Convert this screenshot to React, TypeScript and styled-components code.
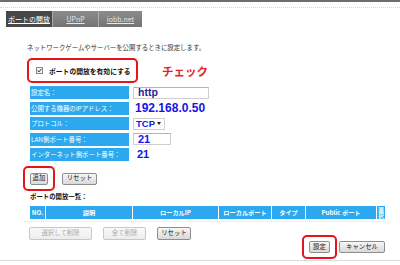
import styled, { createGlobalStyle } from 'styled-components';

const GlobalStyle = createGlobalStyle`
  html, body {
    margin: 0;
    padding: 0;
    background: #fff;
  }
  body {
    font-family: "Noto Sans CJK JP", "Liberation Sans", sans-serif;
    color: #222;
  }
`;

const Page = styled.div`
  width: 400px;
  height: 265px;
  overflow: hidden;
  display: flex;
  flex-direction: column;
`;

const TopRule = styled.div`
  height: 2px;
  background: #6e6e6e;
`;

const DotRule = styled.div`
  margin-top: 5px;
  border-top: 1px dotted #c4dbe4;
`;

const Tabs = styled.nav`
  display: flex;
  margin: 3px 0 0 6px;
  height: 16px;
`;

const Tab = styled.a<{ $active?: boolean; $w: number }>`
  width: ${(p) => p.$w}px;
  display: flex;
  align-items: center;
  justify-content: center;
  background: ${(p) =>
    p.$active ? '#474747' : 'linear-gradient(#8c8c8c, #747474)'};
  color: ${(p) => (p.$active ? '#fff' : '#e6e6e6')};
  border-left: ${(p) => (p.$active ? 'none' : '1px solid #ababab')};
  font-size: 7px;
  line-height: 8px;
  text-decoration: underline;
`;

const Intro = styled.p`
  margin: 16px 0 0 27px;
  font-size: 6.4px;
  line-height: 10px;
  color: #333;
`;

const EnableRow = styled.div`
  display: flex;
  align-items: center;
  gap: 24px;
  margin: 5px 0 0 27px;
`;

const RedFrame = styled.div<{ $w: number; $h: number }>`
  box-sizing: border-box;
  width: ${(p) => p.$w}px;
  height: ${(p) => p.$h}px;
  border: 2px solid #e5141b;
  border-radius: 5px;
  display: flex;
  align-items: center;
`;

const EnableLabel = styled.label`
  display: flex;
  align-items: center;
  gap: 6px;
  margin-left: 7px;
  font-size: 6.8px;
  font-weight: bold;
  color: #111;
`;

const CheckBox = styled.span`
  box-sizing: border-box;
  width: 7px;
  height: 7px;
  border: 1px solid #8a8a8a;
  background: #f4f4f4;
  display: flex;
  align-items: center;
  justify-content: center;
`;

const Note = styled.span`
  font-size: 11.5px;
  font-weight: bold;
  color: #ec1c24;
`;

const Form = styled.div`
  display: grid;
  grid-template-columns: 99px 1fr;
  grid-auto-rows: 13px;
  column-gap: 4px;
  row-gap: 2.5px;
  margin: 3px 0 0 30px;
`;

const Label = styled.div`
  background: #2ba8ee;
  color: #fff;
  font-size: 6.4px;
  line-height: 13px;
  padding-left: 1px;
  white-space: nowrap;
`;

const Value = styled.div`
  display: flex;
  align-items: center;
`;

const TextBox = styled.span<{ $w: number }>`
  box-sizing: border-box;
  width: ${(p) => p.$w}px;
  height: 12px;
  border: 1px solid #cfcfcf;
  border-top-color: #b5b5b5;
  display: flex;
  align-items: center;
  padding-left: 4px;
`;

const BlueText = styled.span<{ $size: number; $dark?: boolean }>`
  font-family: "Liberation Sans", "Noto Sans CJK JP", sans-serif;
  font-size: ${(p) => p.$size}px;
  font-weight: bold;
  color: ${(p) => (p.$dark ? '#22229e' : '#1515e6')};
  line-height: 1;
`;

const Select = styled.span`
  box-sizing: border-box;
  width: 32px;
  height: 12px;
  border: 1px solid #cfcfcf;
  display: flex;
  align-items: center;
  justify-content: space-between;
  padding: 0 3px 0 2px;
`;

const Arrow = styled.span`
  width: 0;
  height: 0;
  border-left: 2.5px solid transparent;
  border-right: 2.5px solid transparent;
  border-top: 3px solid #222;
`;

const Plain = styled.span<{ $pad: number }>`
  padding-left: ${(p) => p.$pad}px;
  display: flex;
  align-items: center;
`;

const ActionRow = styled.div`
  display: flex;
  align-items: center;
  gap: 7px;
  margin: 5px 0 0 23px;
`;

const Button = styled.button<{ $w: number; $h?: number; $disabled?: boolean }>`
  box-sizing: border-box;
  width: ${(p) => p.$w}px;
  height: ${(p) => p.$h ?? 12}px;
  padding: 0;
  font-family: "Noto Sans CJK JP", sans-serif;
  font-size: 6.4px;
  line-height: 1;
  color: ${(p) => (p.$disabled ? '#a8a8a8' : '#111')};
  background: ${(p) =>
    p.$disabled
      ? 'linear-gradient(#fafafa, #ececec)'
      : 'linear-gradient(#f6f6f6, #d9d9d9)'};
  border: 1px solid ${(p) => (p.$disabled ? '#c8c8c8' : '#8e8e8e')};
  border-radius: 2px;
`;

const ListTitle = styled.div`
  margin: 2px 0 0 30px;
  font-size: 6.4px;
  line-height: 8px;
  font-weight: bold;
  color: #111;
`;

const TableHead = styled.div`
  display: grid;
  grid-template-columns: 15px 86px 85px 52px 33px 70px 8px;
  column-gap: 1px;
  height: 13px;
  margin: 5px 0 0 30px;
  width: 355px;
`;

const HeadCell = styled.div`
  background: #2ba8ee;
  color: #fff;
  font-size: 6.2px;
  font-weight: bold;
  display: flex;
  align-items: center;
  justify-content: center;
  white-space: nowrap;
  overflow: hidden;
`;

const VerticalCell = styled(HeadCell)`
  writing-mode: vertical-rl;
  font-size: 5.6px;
  line-height: 8px;
`;

const TableRule = styled.div`
  margin: 2px 0 0 24px;
  width: 362px;
  border-top: 1px dotted #d6e3ea;
`;

const Footer = styled.div`
  display: flex;
  justify-content: space-between;
  align-items: flex-start;
  margin-top: 5px;
  padding: 0 15px 0 29px;
`;

const LeftButtons = styled.div`
  display: flex;
  gap: 11px;
`;

const RightButtons = styled.div`
  display: flex;
  align-items: center;
  gap: 2px;
  margin-top: 8px;
`;

const BottomRule = styled.div`
  margin-top: 1px;
  border-top: 1px solid #dcdcdc;
`;

function App() {
  return (
    <>
      <GlobalStyle />
      <Page>
        <TopRule />
        <DotRule />
        <Tabs>
          <Tab $active $w={46}>ポートの開放</Tab>
          <Tab $w={45}>UPnP</Tab>
          <Tab $w={43}>iobb.net</Tab>
        </Tabs>
        <Intro>ネットワークゲームやサーバーを公開するときに設定します。</Intro>
        <EnableRow>
          <RedFrame $w={111} $h={25}>
            <EnableLabel>
              <CheckBox>
                <svg width="5" height="5" viewBox="0 0 5 5">
                  <path d="M0.6 2.5 L2 3.9 L4.4 0.9" fill="none" stroke="#333" strokeWidth="1" />
                </svg>
              </CheckBox>
              ポートの開放を有効にする
            </EnableLabel>
          </RedFrame>
          <Note>チェック</Note>
        </EnableRow>
        <Form>
          <Label>設定名：</Label>
          <Value>
            <TextBox $w={76}>
              <BlueText $size={10.5} $dark>http</BlueText>
            </TextBox>
          </Value>
          <Label>公開する機器のIPアドレス：</Label>
          <Value>
            <Plain $pad={2}>
              <BlueText $size={12}>192.168.0.50</BlueText>
            </Plain>
          </Value>
          <Label>プロトコル：</Label>
          <Value>
            <Select>
              <BlueText $size={9.5}>TCP</BlueText>
              <Arrow />
            </Select>
          </Value>
          <Label>LAN側ポート番号：</Label>
          <Value>
            <TextBox $w={38}>
              <BlueText $size={11}>21</BlueText>
            </TextBox>
          </Value>
          <Label>インターネット側ポート番号：</Label>
          <Value>
            <Plain $pad={4}>
              <BlueText $size={11}>21</BlueText>
            </Plain>
          </Value>
        </Form>
        <ActionRow>
          <RedFrame $w={32} $h={25} style={{ justifyContent: 'center' }}>
            <Button $w={18}>追加</Button>
          </RedFrame>
          <Button $w={35}>リセット</Button>
        </ActionRow>
        <ListTitle>ポートの開放一覧：</ListTitle>
        <TableHead>
          <HeadCell>NO.</HeadCell>
          <HeadCell>説明</HeadCell>
          <HeadCell>ローカルIP</HeadCell>
          <HeadCell>ローカルポート</HeadCell>
          <HeadCell>タイプ</HeadCell>
          <HeadCell>Public ポート</HeadCell>
          <VerticalCell>選択</VerticalCell>
        </TableHead>
        <TableRule />
        <Footer>
          <LeftButtons>
            <Button $w={63} $h={13} $disabled>選択して削除</Button>
            <Button $w={43} $h={13} $disabled>全て削除</Button>
            <Button $w={34} $h={13}>リセット</Button>
          </LeftButtons>
          <RightButtons>
            <RedFrame $w={35} $h={24} style={{ justifyContent: 'center' }}>
              <Button $w={21}>設定</Button>
            </RedFrame>
            <Button $w={46}>キャンセル</Button>
          </RightButtons>
        </Footer>
        <BottomRule />
      </Page>
    </>
  );
}

export default App;
